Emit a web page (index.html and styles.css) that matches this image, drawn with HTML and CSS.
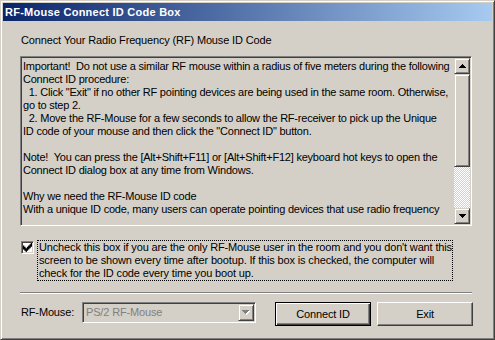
FILE: index.html
```html
<!DOCTYPE html>
<html lang="en">
<head>
  <meta charset="UTF-8">
  <title>RF-Mouse Connect ID Code Box</title>
  <link rel="stylesheet" href="styles.css">
</head>
<body>
<div class="window">
  <div class="titlebar">RF-Mouse Connect ID Code Box</div>
  <div class="dialog">
    <div class="heading">Connect Your Radio Frequency (RF) Mouse ID Code</div>

    <div class="memo">
      <div class="memo-text">
        <div class="line">Important!  Do not use a similar RF mouse within a radius of five meters during the following</div>
        <div class="line">Connect ID procedure:</div>
        <div class="line">  1. Click "Exit" if no other RF pointing devices are being used in the same room. Otherwise,</div>
        <div class="line">go to step 2.</div>
        <div class="line">  2. Move the RF-Mouse for a few seconds to allow the RF-receiver to pick up the Unique</div>
        <div class="line">ID code of your mouse and then click the "Connect ID" button.</div>
        <div class="line"> </div>
        <div class="line">Note!  You can press the [Alt+Shift+F11] or [Alt+Shift+F12] keyboard hot keys to open the</div>
        <div class="line">Connect ID dialog box at any time from Windows.</div>
        <div class="line"> </div>
        <div class="line">Why we need the RF-Mouse ID code</div>
        <div class="line">With a unique ID code, many users can operate pointing devices that use radio frequency</div>
      </div>
      <div class="scrollbar">
        <div class="sb-btn">
          <svg width="7" height="4" viewBox="0 0 7 4"><path d="M3 0h1v1h1v1h1v1h1v1H0V3h1V2h1V1h1z" fill="#000"/></svg>
        </div>
        <div class="sb-thumb"></div>
        <div class="sb-track"></div>
        <div class="sb-btn">
          <svg width="7" height="4" viewBox="0 0 7 4"><path d="M0 0h7v1H6v1H5v1H4v1H3V3H2V2H1V1H0z" fill="#000"/></svg>
        </div>
      </div>
    </div>

    <div class="check-row">
      <span class="checkbox">
        <svg width="9" height="9" viewBox="0 0 7 7"><path d="M0 2h1v1h1v1h1V3h1V2h1V1h1V0h1v3H6v1H5v1H4v1H3v1H2V6H1V5H0z" fill="#000"/></svg>
      </span>
      <div class="check-label">Uncheck this box if you are the only RF-Mouse user in the room and you don't want this
screen to be shown every time after bootup. If this box is checked, the computer will
check for the ID code every time you boot up.</div>
    </div>

    <div class="separator"></div>

    <div class="footer">
      <span class="footer-label">RF-Mouse:</span>
      <div class="combo">
        <span class="combo-text">PS/2 RF-Mouse</span>
        <span class="combo-btn">
          <svg width="8" height="5" viewBox="0 0 8 5"><path d="M1 1h7v1H7v1H6v1H5v1H4V4H3V3H2V2H1z" fill="#fff"/><path d="M0 0h7v1H6v1H5v1H4v1H3V3H2V2H1V1H0z" fill="#808080"/></svg>
        </span>
      </div>
      <button class="btn btn-default">Connect ID</button>
      <button class="btn">Exit</button>
    </div>
  </div>
</div>
</body>
</html>
```

FILE: styles.css
```css
* { box-sizing: border-box; }

body {
  margin: 0;
  background: #d4d0c8;
  font-family: "Liberation Sans", Arial, sans-serif;
  font-size: 11px;
  letter-spacing: -0.15px;
  color: #000;
}

.window {
  width: 495px;
  height: 340px;
  padding: 2px;
  background: #d4d0c8;
  border: 1px solid;
  border-color: #d4d0c8 #404040 #404040 #d4d0c8;
  box-shadow: inset 1px 1px #fff, inset -1px -1px #808080;
}

.titlebar {
  height: 18px;
  line-height: 18px;
  padding-left: 2px;
  background: linear-gradient(to right, #0a246a, #a6caf0);
  color: #fff;
  font-weight: bold;
  font-size: 11px;
  letter-spacing: 0.25px;
}

.dialog {
  padding: 0 17px;
}

.heading {
  margin-top: 13px;
  line-height: 13px;
  padding-left: 1px;
}

/* read-only edit box with scrollbar */
.memo {
  display: flex;
  width: 452px;
  height: 170px;
  margin-top: 9px;
  padding: 1px;
  border: 1px solid;
  border-color: #808080 #fff #fff #808080;
  box-shadow: inset 1px 1px #404040, inset -1px -1px #d4d0c8;
}

.memo-text {
  flex: 1;
  padding: 2px 0 0 1px;
  overflow: hidden;
  letter-spacing: -0.22px;
}

.line {
  height: 13px;
  line-height: 13px;
  white-space: pre;
}

.scrollbar {
  width: 16px;
  display: flex;
  flex-direction: column;
}

.sb-btn,
.sb-thumb,
.combo-btn {
  background: #d4d0c8;
  border: 1px solid;
  border-color: #d4d0c8 #404040 #404040 #d4d0c8;
  box-shadow: inset 1px 1px #fff, inset -1px -1px #808080;
}

.sb-btn {
  height: 16px;
  display: flex;
  align-items: center;
  justify-content: center;
}

.sb-thumb {
  height: 93px;
}

.sb-track {
  flex: 1;
  background: repeating-conic-gradient(#fff 0 25%, #d4d0c8 0 50%) 0 0 / 2px 2px;
}

.check-row {
  display: flex;
  align-items: flex-start;
  margin-top: 14px;
}

.checkbox {
  width: 13px;
  height: 13px;
  margin: 1px 3px 0 1px;
  display: flex;
  align-items: center;
  justify-content: center;
  background: #fff;
  border: 1px solid;
  border-color: #808080 #fff #fff #808080;
  box-shadow: inset 1px 1px #404040, inset -1px -1px #d4d0c8;
}

.check-label {
  width: 416px;
  padding: 0 1px;
  line-height: 13px;
  white-space: pre;
  border: 1px dotted #000;
}

.separator {
  width: 452px;
  margin-top: 11px;
  border-top: 1px solid #808080;
  border-bottom: 1px solid #fff;
}

.footer {
  display: flex;
  align-items: flex-start;
  margin-top: 8px;
}

.footer-label {
  width: 62px;
  padding-left: 1px;
  line-height: 21px;
}

.combo {
  display: flex;
  width: 174px;
  height: 21px;
  padding: 1px;
  border: 1px solid;
  border-color: #808080 #fff #fff #808080;
  box-shadow: inset 1px 1px #404040, inset -1px -1px #d4d0c8;
}

.combo-text {
  flex: 1;
  padding-left: 2px;
  line-height: 17px;
  color: #808080;
}

.combo-btn {
  width: 16px;
  display: flex;
  align-items: center;
  justify-content: center;
}

.btn {
  width: 96px;
  height: 24px;
  margin-left: 6px;
  padding: 0;
  font-family: inherit;
  font-size: 11px;
  letter-spacing: inherit;
  color: #000;
  background: #d4d0c8;
  border: 1px solid;
  border-color: #fff #404040 #404040 #fff;
  box-shadow: inset -1px -1px #808080;
}

.btn-default {
  margin-left: 19px;
  border: 1px solid #000;
  box-shadow: inset 1px 1px #fff, inset -1px -1px #404040, inset -2px -2px #808080;
}
```
